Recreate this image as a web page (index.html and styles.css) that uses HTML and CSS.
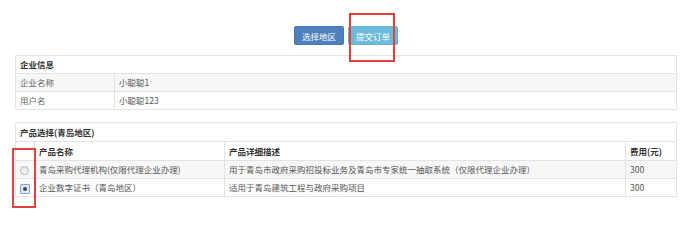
FILE: index.html
```html
<!DOCTYPE html>
<html lang="zh-CN">
<head>
    <meta charset="UTF-8">
    <title>提交订单</title>
    <link rel="stylesheet" href="styles.css">
</head>
<body>
    <div class="toolbar">
        <button class="btn btn-area">选择地区</button>
        <button class="btn btn-submit">提交订单</button>
    </div>

    <div class="content">
        <table class="grid info">
            <colgroup><col class="c-label"><col></colgroup>
            <thead>
                <tr><th colspan="2" class="caption">企业信息</th></tr>
            </thead>
            <tbody>
                <tr><td>企业名称</td><td>小聪聪1</td></tr>
                <tr><td>用户名</td><td>小聪聪123</td></tr>
            </tbody>
        </table>

        <table class="grid products">
            <colgroup><col class="c-radio"><col class="c-name"><col><col class="c-fee"></colgroup>
            <thead>
                <tr><th colspan="4" class="caption">产品选择(青岛地区)</th></tr>
                <tr>
                    <th></th>
                    <th>产品名称</th>
                    <th>产品详细描述</th>
                    <th>费用(元)</th>
                </tr>
            </thead>
            <tbody>
                <tr>
                    <td class="radio-cell"><span class="radio"></span></td>
                    <td>青岛采购代理机构(仅限代理企业办理)</td>
                    <td>用于青岛市政府采购招投标业务及青岛市专家统一抽取系统（仅限代理企业办理）</td>
                    <td>300</td>
                </tr>
                <tr>
                    <td class="radio-cell"><span class="radio checked"></span></td>
                    <td>企业数字证书（青岛地区）</td>
                    <td>适用于青岛建筑工程与政府采购项目</td>
                    <td>300</td>
                </tr>
            </tbody>
        </table>
    </div>

    <div class="mark mark-submit"></div>
    <div class="mark mark-radio"></div>
</body>
</html>
```

FILE: styles.css
```css
body {
    margin: 0;
    padding: 0;
    font-family: "Noto Sans CJK SC", "DejaVu Sans", sans-serif;
    font-size: 8.5px;
    color: #555;
    background-color: #fff;
    position: relative;
}
.toolbar {
    display: flex;
    justify-content: center;
    gap: 4px;
    padding-top: 26px;
    margin-bottom: 10px;
}
.btn {
    height: 19px;
    padding: 0 7px;
    font-family: inherit;
    font-size: 8.5px;
    color: #fff;
    border: 1px solid transparent;
    border-radius: 2px;
    cursor: pointer;
}
.btn-area {
    background-color: #4f80be;
    border-color: #4878b3;
}
.btn-submit {
    background-color: #6dbbdb;
    border-color: #64b3d4;
}
.content {
    padding: 0 15px;
}
.grid {
    width: 100%;
    table-layout: fixed;
    border-collapse: collapse;
    border: 1px solid #e3e3e3;
    margin-bottom: 12px;
}
.grid th,
.grid td {
    padding: 2px 4px;
    line-height: 13px;
    text-align: left;
    border: 1px solid #e3e3e3;
    white-space: nowrap;
    overflow: hidden;
}
.grid th {
    color: #333;
    font-weight: bold;
}
.products thead th {
    line-height: 14px;
}
.grid tbody tr:nth-of-type(odd) {
    background-color: #f7f7f7;
}
.c-label { width: 99px; }
.c-radio { width: 19px; }
.c-name { width: 190px; }
.c-fee { width: 51px; }
.info td:first-child {
    color: #666;
}
.radio-cell {
    text-align: center;
}
.radio {
    display: inline-block;
    width: 7px;
    height: 7px;
    border: 1px solid #b5b5b5;
    border-radius: 50%;
    background: linear-gradient(#e6e6e6, #f8f8f8);
    vertical-align: middle;
    position: relative;
}
.radio.checked {
    width: 8px;
    height: 8px;
    border-color: #7ea6d8;
    border-radius: 1px;
    background: #dce8f7;
}
.radio.checked::after {
    content: "";
    position: absolute;
    left: 2px;
    top: 2px;
    width: 4px;
    height: 4px;
    border-radius: 50%;
    background-color: #444;
}
.mark {
    position: absolute;
    border: 2px solid #e5413c;
    pointer-events: none;
}
.mark-submit {
    left: 349px;
    top: 13px;
    width: 42px;
    height: 45px;
}
.mark-radio {
    left: 12px;
    top: 148px;
    width: 20px;
    height: 56px;
}
```
